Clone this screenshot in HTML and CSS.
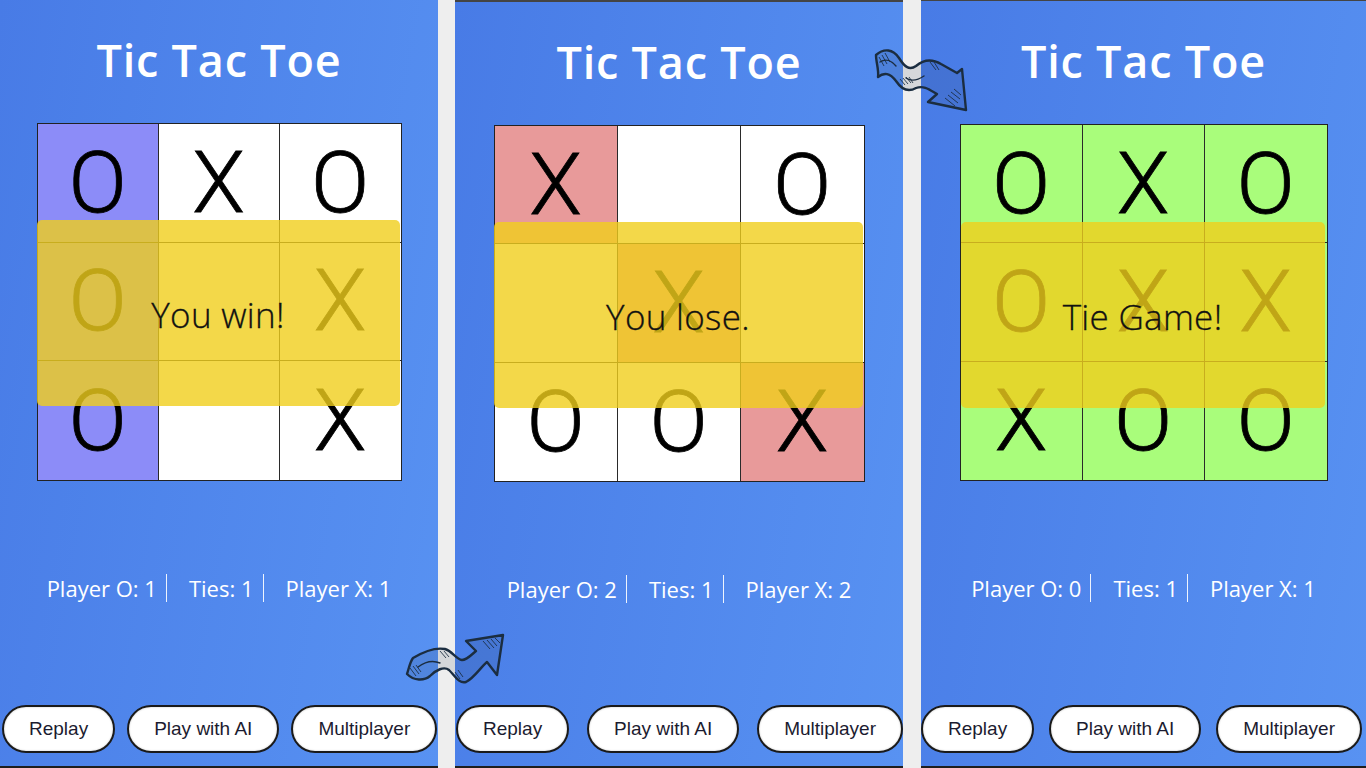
FILE: index.html
```html
<!DOCTYPE html>
<html lang="en">
<head>
<meta charset="utf-8">
<title>Tic Tac Toe</title>
<link rel="stylesheet" href="styles.css">
</head>
<body>
<div class="stage">
  <section class="panel panel-1">
    <h1 class="title">Tic Tac Toe</h1>
    <div class="board-wrap">
      <div class="board">
        <div class="cell win-o">O</div><div class="cell">X</div><div class="cell">O</div>
        <div class="cell win-o">O</div><div class="cell"></div><div class="cell">X</div>
        <div class="cell win-o">O</div><div class="cell"></div><div class="cell">X</div>
      </div>
      <div class="result">You win!</div>
    </div>
    <div class="score"><span class="sep">Player O: 1</span><span class="sep">Ties: 1</span><span>Player X: 1</span></div>
    <div class="buttons"><button class="btn">Replay</button><button class="btn">Play with AI</button><button class="btn">Multiplayer</button></div>
  </section>
  <section class="panel panel-2">
    <h1 class="title">Tic Tac Toe</h1>
    <div class="board-wrap">
      <div class="board">
        <div class="cell lose">X</div><div class="cell"></div><div class="cell">O</div>
        <div class="cell"></div><div class="cell lose">X</div><div class="cell"></div>
        <div class="cell">O</div><div class="cell">O</div><div class="cell lose">X</div>
      </div>
      <div class="result">You lose.</div>
    </div>
    <div class="score"><span class="sep">Player O: 2</span><span class="sep">Ties: 1</span><span>Player X: 2</span></div>
    <div class="buttons"><button class="btn">Replay</button><button class="btn">Play with AI</button><button class="btn">Multiplayer</button></div>
  </section>
  <section class="panel panel-3">
    <h1 class="title">Tic Tac Toe</h1>
    <div class="board-wrap">
      <div class="board tie">
        <div class="cell">O</div><div class="cell">X</div><div class="cell">O</div>
        <div class="cell">O</div><div class="cell">X</div><div class="cell">X</div>
        <div class="cell">X</div><div class="cell">O</div><div class="cell">O</div>
      </div>
      <div class="result">Tie Game!</div>
    </div>
    <div class="score"><span class="sep">Player O: 0</span><span class="sep">Ties: 1</span><span>Player X: 1</span></div>
    <div class="buttons"><button class="btn">Replay</button><button class="btn">Play with AI</button><button class="btn">Multiplayer</button></div>
  </section>

  <svg class="arrow arrow-top" viewBox="860 40 120 80" width="120" height="80" aria-hidden="true">
    <g fill="rgba(30,50,75,0.12)" stroke="#1b2d40" stroke-width="2.4" stroke-linecap="round" stroke-linejoin="round">
      <path d="M876,55 C884,48 893,49 899,58 C904,66 909,71 916,66 C923,60 931,58 941,64 L957,73 L962,69 L966,110 L928,102 L937,94 C930,90 924,85 916,88 C909,92 902,90 896,81 C890,73 884,72 878,77 C879,70 876,62 876,55 Z"/>
    </g>
    <g fill="none" stroke="#1b2d40" stroke-width="1.4" stroke-linecap="round">
      <path d="M880,62 C886,58 892,61 896,66"/>
      <path d="M906,78 C912,82 918,80 924,76"/>
    </g>
    <g stroke="#1b2d40" stroke-width="1" opacity="0.85">
      <path d="M879,57 L884,66 M882,55 L887,64 M885,53 L890,62"/>
      <path d="M945,98 L955,106 M948,95 L958,103 M951,92 L960,99 M954,89 L961,95"/>
      <path d="M900,79 L905,85 M903,78 L908,84 M906,77 L911,83 M909,77 L913,83"/>
      <path d="M930,62 L936,70 M934,62 L939,70"/>
    </g>
  </svg>

  <svg class="arrow arrow-bottom" viewBox="400 620 120 80" width="120" height="80" aria-hidden="true">
    <g fill="rgba(30,50,75,0.12)" stroke="#1b2d40" stroke-width="2.4" stroke-linecap="round" stroke-linejoin="round">
      <path d="M413,658 C423,652 434,647 445,649 C452,651 456,659 462,660 C467,660 471,655 476,651 L466,641 L503,635 L497,675 L487,662 C480,668 474,678 466,682 C459,684 455,676 449,670 C444,666 436,670 430,676 C424,681 414,681 407,674 C409,668 410,662 413,658 Z"/>
    </g>
    <g fill="none" stroke="#1b2d40" stroke-width="1.4" stroke-linecap="round">
      <path d="M418,667 C426,661 433,660 440,663"/>
    </g>
    <g stroke="#1b2d40" stroke-width="1" opacity="0.85">
      <path d="M487,640 L494,648 M491,639 L497,646 M495,638 L500,643 M483,641 L490,649"/>
      <path d="M410,668 L416,676 M413,666 L419,674 M416,665 L421,672"/>
      <path d="M440,651 L446,658 M444,651 L449,657"/>
      <path d="M455,672 L460,679 M458,670 L463,677"/>
    </g>
  </svg>
</div>
</body>
</html>
```
FILE: styles.css
```css
* { box-sizing: border-box; }
html, body { margin: 0; padding: 0; }
body {
  width: 1366px;
  height: 768px;
  overflow: hidden;
  background: #eeeeee;
  font-family: "Open Sans", "DejaVu Sans", sans-serif;
}
.stage {
  position: relative;
  display: flex;
  width: 1366px;
  height: 768px;
}
.panel {
  display: flex;
  flex-direction: column;
  align-items: center;
  height: 768px;
  background: linear-gradient(100deg, #487be6 0%, #5892f2 100%);
  border-bottom: 2px solid #1e1e1e;
}
.panel-1 { width: 438px; margin-right: 17px; }
.panel-2 { width: 448px; margin-right: 18px; border-top: 2px solid #444; }
.panel-3 { width: 445px; border-top: 1px solid #444; }

.title {
  margin: 35px 0 0;
  height: 50px;
  font-family: "Open Sans", "DejaVu Sans", sans-serif;
  font-weight: 600;
  font-size: 45px;
  line-height: 50px;
  color: #ffffff;
  letter-spacing: 0.8px;
}

.board-wrap {
  position: relative;
  margin-top: 38px;
}

.board {
  display: grid;
  grid-template-columns: repeat(3, 1fr);
  grid-template-rows: repeat(3, 1fr);
  width: 365px;
  height: 358px;
  border: 1px solid #222;
  background: #ffffff;
}
.panel-2 .board { width: 371px; height: 357px; }
.panel-3 .board { width: 368px; height: 357px; }

.cell {
  display: flex;
  align-items: center;
  justify-content: center;
  border-right: 1px solid #2a2a2a;
  border-bottom: 1px solid #2a2a2a;
  font-family: "Roboto", "Liberation Sans", sans-serif;
  font-weight: 300;
  font-size: 86px;
  line-height: 1;
  color: #000;
  -webkit-text-stroke: 0.8px #000;
}
.cell:nth-child(3n) { border-right: none; }
.cell:nth-child(n+7) { border-bottom: none; }
.win-o { background: #8c8cf8; }
.lose { background: #e89a9a; }
.tie .cell { background: #a9fd7b; }

.result {
  position: absolute;
  left: 0;
  top: 97px;
  width: 363px;
  height: 186px;
  display: flex;
  align-items: center;
  justify-content: center;
  border-radius: 5px;
  background: rgba(240, 206, 28, 0.8);
  font-family: "Open Sans", "DejaVu Sans", sans-serif;
  font-weight: 300;
  font-size: 35px;
  letter-spacing: 0.3px;
  color: #111111;
  -webkit-text-stroke: 0.3px #111;
  padding-top: 2px;
}
.panel-2 .result { width: 369px; top: 97px; }
.panel-3 .result { width: 364px; left: 1px; top: 98px; }

.score {
  display: flex;
  align-items: center;
  margin-top: 92px;
  height: 30px;
  font-family: "Open Sans", "DejaVu Sans", sans-serif;
  font-size: 22px;
  color: #ffffff;
}
.sep {
  display: flex;
  align-items: center;
  height: 28px;
  padding-right: 9px;
  margin-right: 22px;
  border-right: 1.5px solid rgba(255, 255, 255, 0.9);
}

.buttons {
  display: flex;
  justify-content: space-between;
  gap: 12px;
  width: 100%;
  margin-top: auto;
  margin-bottom: 13px;
  padding: 0 1px 0 2px;
}
.panel-2 .buttons { padding: 0 0 0 1px; }
.panel-3 .buttons { padding: 0 4px 0 0; }
.btn {
  flex: 0 1 auto;
  height: 48px;
  padding: 0 25px;
  border: 2px solid #1a1a1a;
  border-radius: 24px;
  background: #ffffff;
  box-shadow: inset 0 0 2px rgba(0, 0, 0, 0.25);
  font-family: "Liberation Sans", Arial, sans-serif;
  font-size: 19px;
  color: #1b1b30;
  white-space: nowrap;
}

.arrow {
  position: absolute;
  overflow: visible;
}
.arrow-top { left: 860px; top: 40px; }
.arrow-bottom { left: 400px; top: 620px; }
```
